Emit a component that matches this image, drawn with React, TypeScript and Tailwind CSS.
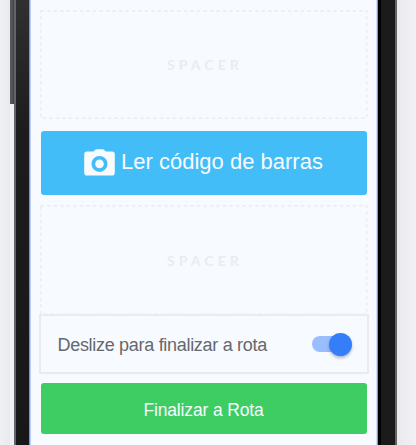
function Spacer({ height }: { height: number }) {
  return (
    <div
      className="relative flex w-[328px] shrink-0 items-center justify-center"
      style={{ height }}
    >
      <svg className="absolute inset-0 h-full w-full" fill="none" aria-hidden="true">
        <rect
          x="0.7"
          y="0.9"
          width="326.2"
          height={height - 1.8}
          stroke="#ebeef3"
          strokeWidth="1.6"
          strokeDasharray="3.6 2.9"
        />
      </svg>
      <span className="pl-[3px] pt-px font-[Lato,sans-serif] text-[14px] font-bold leading-4 tracking-[4.1px] text-[#e8ecf3]">
        SPACER
      </span>
    </div>
  );
}

function CameraIcon() {
  return (
    <svg className="h-[27px] w-[31px] shrink-0" viewBox="0 0 31 27" aria-hidden="true">
      <path
        fill="#f7faff"
        fillRule="evenodd"
        d="M3 2.6H9.5L11.2 0.8Q11.7 0.2 12.5 0.2H18.8Q19.6 0.2 20.1 0.8L21.8 2.6H28Q30.8 2.6 30.8 5.4V23.7Q30.8 26.5 28 26.5H3Q0.2 26.5 0.2 23.7V5.4Q0.2 2.6 3 2.6ZM15.5 6.9A8 8 0 1 0 15.5 22.9A8 8 0 1 0 15.5 6.9Z"
      />
      <circle cx="15.5" cy="14.9" r="4.3" fill="#f7faff" />
    </svg>
  );
}

export default function App() {
  return (
    <div className="flex h-[445px] w-[416px] overflow-hidden bg-[#f0f1f5] font-['Liberation_Sans',Arial,sans-serif]">
      <div className="w-[10px] shrink-0 bg-gradient-to-r from-[#f0f1f5] to-[#e9eaee]" />
      <div className="h-[104px] w-[4px] shrink-0 bg-gradient-to-r from-[#555] via-[#585a5b] to-[#3c3c3c]" />
      <div className="w-[2px] shrink-0 bg-[#626466]" />
      <div className="w-[13px] shrink-0 bg-gradient-to-b from-[#303030] via-[#1c1c1c] via-30% to-[#181818]" />
      <div className="w-px shrink-0 bg-[#6f98ea]" />
      <div className="w-px shrink-0 bg-[#b5cdff]" />
      <div className="flex w-[345px] shrink-0 flex-col items-center bg-[#f7faff] pt-[10px]">
        <Spacer height={109} />
        <button className="mt-[11.5px] flex h-[64px] w-[326px] shrink-0 items-center justify-center gap-[6px] rounded-[3px] bg-[#42bdf8] text-[22px] leading-[26px] text-[#f7faff]">
          <CameraIcon />
          <span className="whitespace-nowrap pb-px">Ler código de barras</span>
        </button>
        <div className="h-[10.5px] shrink-0" />
        <Spacer height={110} />
        <div className="-mt-px flex h-[60px] w-[330px] shrink-0 items-center justify-between border-2 border-[#e8ebef] pl-[17px] pr-[15px]">
          <span className="whitespace-nowrap pt-px text-[18px] leading-5 tracking-[-0.3px] text-[#65686c]">
            Deslize para finalizar a rota
          </span>
          <div className="flex h-6 w-10 items-center">
            <div className="flex h-4 w-[38px] items-center justify-end rounded-full bg-[#9abdfd]">
              <div className="-mr-[2px] h-[23px] w-[23px] rounded-full bg-[#347ef9] shadow-[0_2px_3px_rgba(40,60,100,0.35)]" />
            </div>
          </div>
        </div>
        <button className="mt-[9px] h-[51px] w-[326px] shrink-0 rounded-[3px] bg-[#3ecd63] pt-[2px] text-[17.5px] leading-5 tracking-[-0.15px] text-[#f7faff]">
          <span className="whitespace-nowrap">Finalizar a Rota</span>
        </button>
      </div>
      <div className="w-px shrink-0 bg-[#cfdfff]" />
      <div className="w-px shrink-0 bg-[#6d98f0]" />
      <div className="w-[3px] shrink-0 bg-black" />
      <div className="w-[14px] shrink-0 bg-[#1b1b1b]" />
      <div className="w-[2px] shrink-0 bg-[#686464]" />
      <div className="flex-1 bg-gradient-to-r from-[#e9e9ee] to-[#f0f0f5]" />
    </div>
  );
}
